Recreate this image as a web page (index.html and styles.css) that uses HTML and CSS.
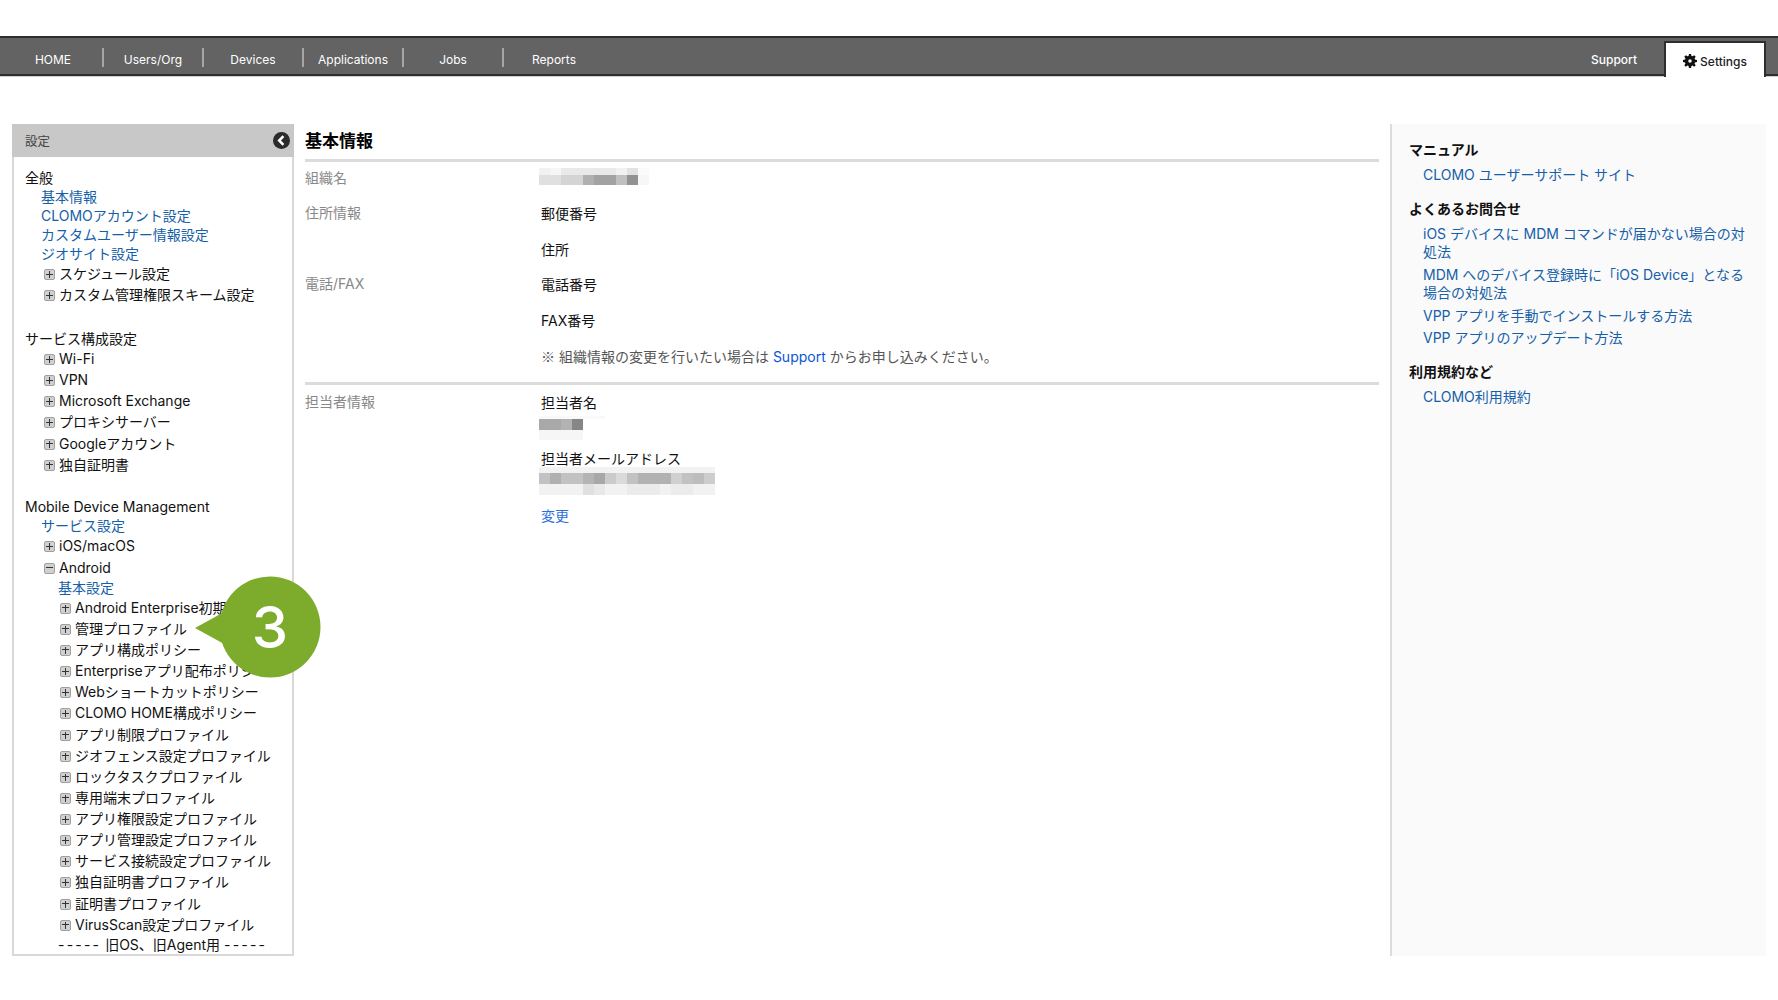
FILE: index.html
```html
<!DOCTYPE html>
<html lang="ja">
<head>
<meta charset="utf-8">
<title>基本情報</title>
<link rel="stylesheet" href="styles.css">
</head>
<body>
<nav class="nav">
  <ul class="nav-main">
    <li>HOME</li><li>Users/Org</li><li>Devices</li><li>Applications</li><li>Jobs</li><li class="last">Reports</li>
  </ul>
  <div class="nav-right">
    <span class="nav-support">Support</span>
    <span class="nav-tab">
      <svg class="gear" viewBox="0 0 16 16"><path d="M6.8 0h2.4l.4 2.2 1.3.5 1.9-1.3 1.7 1.7-1.3 1.9.5 1.3 2.3.5v2.4l-2.3.4-.5 1.3 1.3 1.9-1.7 1.7-1.9-1.3-1.3.5-.4 2.3H6.8l-.4-2.3-1.3-.5-1.9 1.3-1.7-1.7 1.3-1.9-.5-1.3L0 9.2V6.8l2.3-.5.5-1.3-1.3-1.9 1.7-1.7 1.9 1.3 1.3-.5z M8 6a2 2 0 1 0 0 4 2 2 0 0 0 0-4z" fill-rule="evenodd"/></svg>
      Settings
    </span>
  </div>
</nav>

<div class="page">
  <aside class="side">
    <header class="side-head">
      <span>設定</span>
      <svg class="collapse" viewBox="0 0 16 16"><circle cx="8" cy="8" r="8" fill="#2b2b2b"/><path d="M9.8 3.8 5.8 8l4 4.2" fill="none" stroke="#fff" stroke-width="2.4"/></svg>
    </header>
    <div class="tree">
      <section class="group g1">
        <h3>全般</h3>
        <a class="lnk">基本情報</a>
        <a class="lnk">CLOMOアカウント設定</a>
        <a class="lnk">カスタムユーザー情報設定</a>
        <a class="lnk">ジオサイト設定</a>
        <div class="row"><i class="ico"></i>スケジュール設定</div>
        <div class="row"><i class="ico"></i>カスタム管理権限スキーム設定</div>
      </section>
      <section class="group g2">
        <h3>サービス構成設定</h3>
        <div class="row"><i class="ico"></i>Wi-Fi</div>
        <div class="row"><i class="ico"></i>VPN</div>
        <div class="row"><i class="ico"></i>Microsoft Exchange</div>
        <div class="row"><i class="ico"></i>プロキシサーバー</div>
        <div class="row"><i class="ico"></i>Googleアカウント</div>
        <div class="row"><i class="ico"></i>独自証明書</div>
      </section>
      <section class="group g3">
        <h3>Mobile Device Management</h3>
        <a class="lnk">サービス設定</a>
        <div class="row"><i class="ico"></i>iOS/macOS</div>
        <div class="row"><i class="ico minus"></i>Android</div>
        <a class="lnk sub">基本設定</a>
        <div class="row sub"><i class="ico"></i>Android Enterprise初期設定</div>
        <div class="row sub"><i class="ico"></i>管理プロファイル</div>
        <div class="row sub"><i class="ico"></i>アプリ構成ポリシー</div>
        <div class="row sub"><i class="ico"></i>Enterpriseアプリ配布ポリシー</div>
        <div class="row sub"><i class="ico"></i>Webショートカットポリシー</div>
        <div class="row sub"><i class="ico"></i>CLOMO HOME構成ポリシー</div>
        <div class="row sub"><i class="ico"></i>アプリ制限プロファイル</div>
        <div class="row sub"><i class="ico"></i>ジオフェンス設定プロファイル</div>
        <div class="row sub"><i class="ico"></i>ロックタスクプロファイル</div>
        <div class="row sub"><i class="ico"></i>専用端末プロファイル</div>
        <div class="row sub"><i class="ico"></i>アプリ権限設定プロファイル</div>
        <div class="row sub"><i class="ico"></i>アプリ管理設定プロファイル</div>
        <div class="row sub"><i class="ico"></i>サービス接続設定プロファイル</div>
        <div class="row sub"><i class="ico"></i>独自証明書プロファイル</div>
        <div class="row sub"><i class="ico"></i>証明書プロファイル</div>
        <div class="row sub"><i class="ico"></i>VirusScan設定プロファイル</div>
        <div class="legacy"><span class="dash">-----</span> 旧OS、旧Agent用 <span class="dash">-----</span></div>
      </section>
    </div>
    <div class="callout">
      <svg viewBox="0 0 128 104"><circle cx="75" cy="52" r="50.5" fill="#7dab2c"/><polygon points="0,53 40,31 40,75" fill="#7dab2c"/></svg>
      <span class="callout-num">3</span>
    </div>
  </aside>

  <main class="main">
    <h1 class="title">基本情報</h1>
    <section class="info first">
      <div class="label">組織名</div>
      <div class="values">
        <svg class="mosaic m-org" viewBox="0 0 110 17" shape-rendering="crispEdges">
          <rect width="11" height="7" fill="#f1f1f1"/><rect x="11" width="11" height="7" fill="#f6f6f6"/><rect x="22" width="55" height="7" fill="#e9e9e9"/><rect x="77" width="11" height="7" fill="#f1f1f1"/><rect x="88" width="11" height="7" fill="#e2e2e2"/><rect x="99" width="11" height="7" fill="#fbfbfb"/>
          <rect y="7" width="22" height="10" fill="#e0e0e0"/><rect x="22" y="7" width="22" height="10" fill="#d4d4d4"/><rect x="44" y="7" width="11" height="10" fill="#b0b0b0"/><rect x="55" y="7" width="22" height="10" fill="#a2a2a2"/><rect x="77" y="7" width="11" height="10" fill="#c0c0c0"/><rect x="88" y="7" width="11" height="10" fill="#929292"/><rect x="99" y="7" width="11" height="10" fill="#f7f7f7"/>
        </svg>
      </div>
    </section>
    <section class="info">
      <div class="label">住所情報</div>
      <div class="values">
        <div class="val">郵便番号</div>
        <div class="val">住所</div>
      </div>
    </section>
    <section class="info">
      <div class="label">電話/FAX</div>
      <div class="values">
        <div class="val">電話番号</div>
        <div class="val">FAX番号</div>
        <p class="note"><span class="kome">※</span> 組織情報の変更を行いたい場合は <a>Support</a> からお申し込みください。</p>
      </div>
    </section>
    <section class="info ruled">
      <div class="label">担当者情報</div>
      <div class="values">
        <div class="val tight">担当者名</div>
        <svg class="mosaic m-person" viewBox="0 0 66 24" shape-rendering="crispEdges">
          <rect width="66" height="3" fill="#f9f9f9"/>
          <rect y="3" width="33" height="11" fill="#a9a9a9"/><rect x="22" y="3" width="11" height="11" fill="#b2b2b2"/><rect x="33" y="3" width="11" height="11" fill="#868686"/>
          <rect y="14" width="44" height="10" fill="#f6f6f6"/>
        </svg>
        <div class="val tight mail">担当者メールアドレス</div>
        <svg class="mosaic m-mail" viewBox="0 0 176 28" shape-rendering="crispEdges">
          <rect width="176" height="6" fill="#f2f2f2"/>
          <rect y="6" width="176" height="11" fill="#c2c2c2"/><rect x="11" y="6" width="11" height="11" fill="#b0b0b0"/><rect x="44" y="6" width="11" height="11" fill="#b4b4b4"/><rect x="55" y="6" width="11" height="11" fill="#a8a8a8"/><rect x="66" y="6" width="11" height="11" fill="#cbcbcb"/><rect x="77" y="6" width="11" height="11" fill="#dadada"/><rect x="99" y="6" width="33" height="11" fill="#b2b2b2"/><rect x="132" y="6" width="11" height="11" fill="#d0d0d0"/><rect x="154" y="6" width="11" height="11" fill="#bdbdbd"/><rect x="165" y="6" width="11" height="11" fill="#cdcdcd"/>
          <rect y="17" width="176" height="11" fill="#f2f2f2"/><rect x="44" y="17" width="11" height="11" fill="#e0e0e0"/><rect x="55" y="17" width="11" height="11" fill="#e8e8e8"/><rect x="88" y="17" width="33" height="11" fill="#ebebeb"/><rect x="132" y="17" width="22" height="11" fill="#ececec"/>
        </svg>
        <a class="change">変更</a>
      </div>
    </section>
  </main>

  <aside class="help">
    <h3>マニュアル</h3>
    <ul><li>CLOMO ユーザーサポート サイト</li></ul>
    <h3>よくあるお問合せ</h3>
    <ul>
      <li>iOS デバイスに MDM コマンドが届かない場合の対処法</li>
      <li>MDM へのデバイス登録時に「iOS Device」となる場合の対処法</li>
      <li>VPP アプリを手動でインストールする方法</li>
      <li>VPP アプリのアップデート方法</li>
    </ul>
    <h3>利用規約など</h3>
    <ul><li>CLOMO利用規約</li></ul>
  </aside>
</div>
</body>
</html>
```
FILE: styles.css
```css
* { box-sizing: border-box; }
html, body { margin: 0; padding: 0; }
body {
  height: 1000px;
  overflow: hidden;
  background: #fff;
  color: #111;
  font-family: "Inter", "Noto Sans CJK JP", sans-serif;
  font-size: 14px;
}
a { color: #1560a8; }
ul { list-style: none; margin: 0; padding: 0; }

.nav {
  margin-top: 36px;
  height: 40px;
  background: #636363;
  border-top: 2px solid #2e2e2e;
  border-bottom: 2px solid #2e2e2e;
  box-shadow: 0 1px 0 #cfcfcf;
  display: flex;
  justify-content: space-between;
  color: #fff;
  font-size: 12px;
}
.nav-main { display: flex; padding-left: 4px; }
.nav-main li {
  width: 100px;
  height: 19px;
  margin-top: 10px;
  line-height: 24px;
  text-align: center;
  border-right: 2px solid #a5a5a5;
}
.nav-main li.last { border-right: 0; }
.nav-right { display: flex; margin-right: 12px; }
.nav-support { width: 100px; text-align: center; line-height: 43px; font-weight: 500; }
.nav-tab {
  width: 102px;
  height: 36px;
  margin-top: 3px;
  background: #fff;
  color: #222;
  border: 2px solid #2e2e2e;
  border-bottom: 0;
  display: flex;
  align-items: center;
  justify-content: center;
  gap: 3px;
  font-weight: 500;
  padding-top: 2px;
}
.gear { width: 14px; height: 14px; fill: #111; }

.page { display: flex; margin: 48px 12px 0; height: 832px; }

.side {
  position: relative;
  width: 282px;
  flex: none;
  border: 2px solid #d8d8d8;
  border-top: 0;
}
.side-head {
  height: 33px;
  margin: 0 -2px;
  background: #c8c8c8;
  display: flex;
  align-items: center;
  justify-content: space-between;
  padding: 0 4px 0 13px;
  font-size: 12.5px;
  color: #444;
}
.collapse { width: 17px; height: 17px; }
.tree { padding: 11px 0 0 11px; line-height: 19px; overflow: hidden; height: 797px; }
.group h3 { margin: 0; font-size: 14px; font-weight: 400; line-height: 19px; }
.g2 { margin-top: 23.7px; }
.g3 { margin-top: 22.5px; }
.lnk { display: block; height: 19px; margin-left: 16px; }
.lnk.sub { margin-left: 33px; }
.row { height: 21.15px; line-height: 21px; display: flex; align-items: center; margin-left: 19px; white-space: nowrap; }
.row.sub { margin-left: 35px; }
.ico {
  position: relative;
  top: 1px;
  width: 11px;
  height: 11px;
  margin-right: 4px;
  flex: none;
  background: #d0d0d0;
  border: 1px solid #a0a0a0;
  border-radius: 2px;
}
.ico::before { content: ""; position: absolute; left: 1px; right: 1px; top: 3.5px; height: 1px; background: #333; }
.ico::after { content: ""; position: absolute; top: 1px; bottom: 1px; left: 3.5px; width: 1px; background: #333; }
.ico.minus::after { display: none; }
.legacy { margin-left: 33px; height: 19px; white-space: nowrap; }
.dash { letter-spacing: 2.2px; }

.callout { position: absolute; left: 181px; top: 451px; width: 128px; height: 104px; pointer-events: none; }
.callout svg { display: block; width: 128px; height: 104px; }
.callout-num {
  position: absolute;
  left: 0;
  top: 0;
  width: 150px;
  line-height: 104px;
  text-align: center;
  color: #fff;
  font-size: 58px;
  font-weight: 500;
  font-family: "Inter", sans-serif;
}

.main { width: 1074px; margin-left: 11px; flex: none; }
.title { margin: 0; height: 38px; line-height: 34px; font-size: 17px; font-weight: 700; border-bottom: 3px solid #dcdcdc; color: #000; }
.info { display: flex; }
.info.first { height: 34px; padding-top: 6px; }
.label { width: 236px; flex: none; color: #888; line-height: 20px; }
.info:not(.first) .label { padding-top: 7px; }
.info.ruled .label { padding-top: 4px; }
.values { flex: 1; }
.val { height: 35.5px; line-height: 35.5px; }
.note { margin: 0; height: 36px; line-height: 36px; color: #555; }
.note a { color: #0b55d6; }
.kome { font-family: "Noto Sans CJK JP", sans-serif; }
.ruled { border-top: 3px solid #dcdcdc; margin-top: 8px; padding-top: 3px; }
.val.tight { height: 28px; line-height: 28px; margin-top: 1px; }
.mosaic { display: block; margin-left: -2px; }
.m-org { width: 110px; height: 17px; }
.m-person { width: 66px; height: 24px; margin-top: -1px; }
.m-mail { width: 176px; height: 28px; margin-top: -6px; }
.val.tight.mail { margin-top: 4.5px; }
.change { display: block; color: #2a6fdc; margin-top: 10px; }

.help {
  width: 376px;
  margin-left: 11px;
  flex: none;
  background: #fafafa;
  border-left: 2px solid #dcdcdc;
  padding: 16px 20px 0 17px;
}
.help h3 { margin: 0 0 6px; font-size: 14px; font-weight: 700; line-height: 20px; color: #111; }
.help ul { margin: 0 0 14px 14px; }
.help li { color: #1560a8; line-height: 18.5px; margin-bottom: 4px; }
```
